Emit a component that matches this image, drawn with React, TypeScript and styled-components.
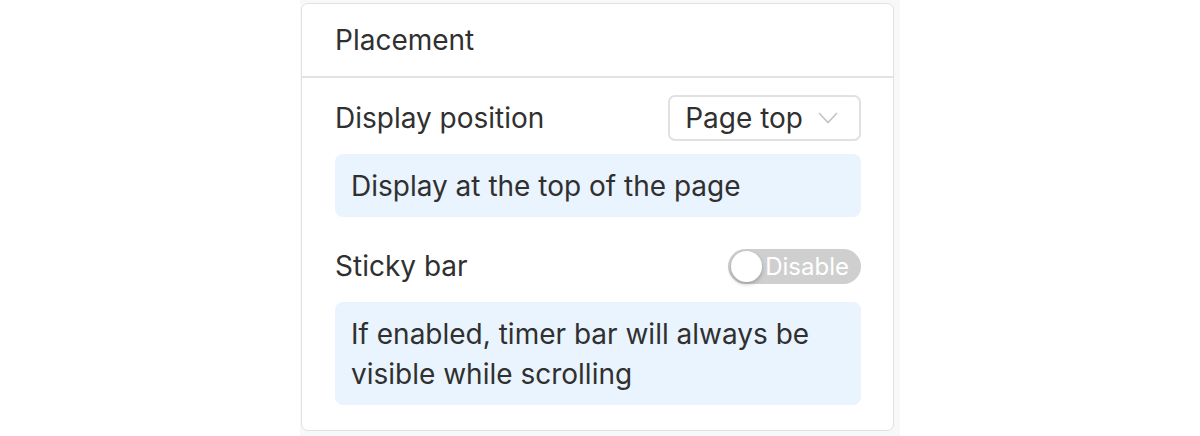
import React, { useState } from 'react'
import styled, { createGlobalStyle } from 'styled-components'

const GlobalStyle = createGlobalStyle`
    html, body {
        margin: 0;
        padding: 0;
        background: #ffffff;
    }
    body {
        font-family: Inter, 'Noto Sans', 'Liberation Sans', sans-serif;
        color: #303030;
    }
`

const Page = styled.div`
    display: flex;
    justify-content: center;
`

const Frame = styled.div`
    width: 600px;
    height: 436px;
    box-sizing: border-box;
    background: #f7f8fa;
    padding: 3px 6px 5px 1px;
`

const Card = styled.section`
    box-sizing: border-box;
    height: 100%;
    background: #ffffff;
    border: 1px solid #e1e1e1;
    border-radius: 7px;
    display: flex;
    flex-direction: column;
`

const CardHeader = styled.div`
    height: 72px;
    display: flex;
    align-items: center;
    padding: 0 33px;
    border-bottom: 2px solid #e3e3e3;
    font-size: 28px;
`

const CardBody = styled.div`
    padding: 17px 32px 24px 33px;
    display: flex;
    flex-direction: column;
    gap: 26px;
`

const Section = styled.div`
    display: flex;
    flex-direction: column;
    gap: 13px;
`

const Row = styled.div`
    height: 46px;
    display: flex;
    align-items: center;
    justify-content: space-between;
`

const Label = styled.span`
    font-size: 28px;
`

const SelectBox = styled.button`
    height: 46px;
    box-sizing: border-box;
    display: flex;
    align-items: center;
    gap: 15px;
    padding: 0 21px 0 15px;
    background: #ffffff;
    border: 2px solid #e1e1e1;
    border-radius: 7px;
    font-family: inherit;
    font-size: 28px;
    color: #303030;
`

const Info = styled.div`
    background: #eaf4fe;
    border-radius: 8px;
    padding: 12px 16px 11px;
    font-size: 28px;
    line-height: 40px;
`

const Toggle = styled.button<{ $on: boolean }>`
    position: relative;
    width: 133px;
    height: 35px;
    border: none;
    border-radius: 18px;
    background: ${p => (p.$on ? '#2c6ecb' : '#cfcfcf')};
    padding: 0 12px 0 38px;
    display: flex;
    align-items: center;
    justify-content: flex-end;
    font-family: inherit;
    font-size: 24px;
    color: #ffffff;
    cursor: pointer;
`

const Knob = styled.span<{ $on: boolean }>`
    position: absolute;
    top: 2px;
    left: ${p => (p.$on ? '100px' : '3px')};
    width: 31px;
    height: 31px;
    border-radius: 50%;
    background: #ffffff;
    box-shadow: 0 2px 4px rgba(0, 0, 0, 0.25);
`

const Chevron = () => (
    <svg width="20" height="12" viewBox="0 0 20 12" fill="none">
        <path d="M1 1l9 9.5 9-9.5" stroke="#c4c4c4" strokeWidth="1.6" />
    </svg>
)

const App = () => {
    const [sticky, setSticky] = useState(false)

    return (
        <Page>
            <GlobalStyle />
            <Frame>
                <Card>
                    <CardHeader>Placement</CardHeader>
                    <CardBody>
                        <Section>
                            <Row>
                                <Label>Display position</Label>
                                <SelectBox>
                                    Page top
                                    <Chevron />
                                </SelectBox>
                            </Row>
                            <Info>Display at the top of the page</Info>
                        </Section>
                        <Section>
                            <Row>
                                <Label>Sticky bar</Label>
                                <Toggle $on={sticky} onClick={() => setSticky(!sticky)}>
                                    <Knob $on={sticky} />
                                    {sticky ? 'Enable' : 'Disable'}
                                </Toggle>
                            </Row>
                            <Info>If enabled, timer bar will always be visible while scrolling</Info>
                        </Section>
                    </CardBody>
                </Card>
            </Frame>
        </Page>
    )
}

export default App
